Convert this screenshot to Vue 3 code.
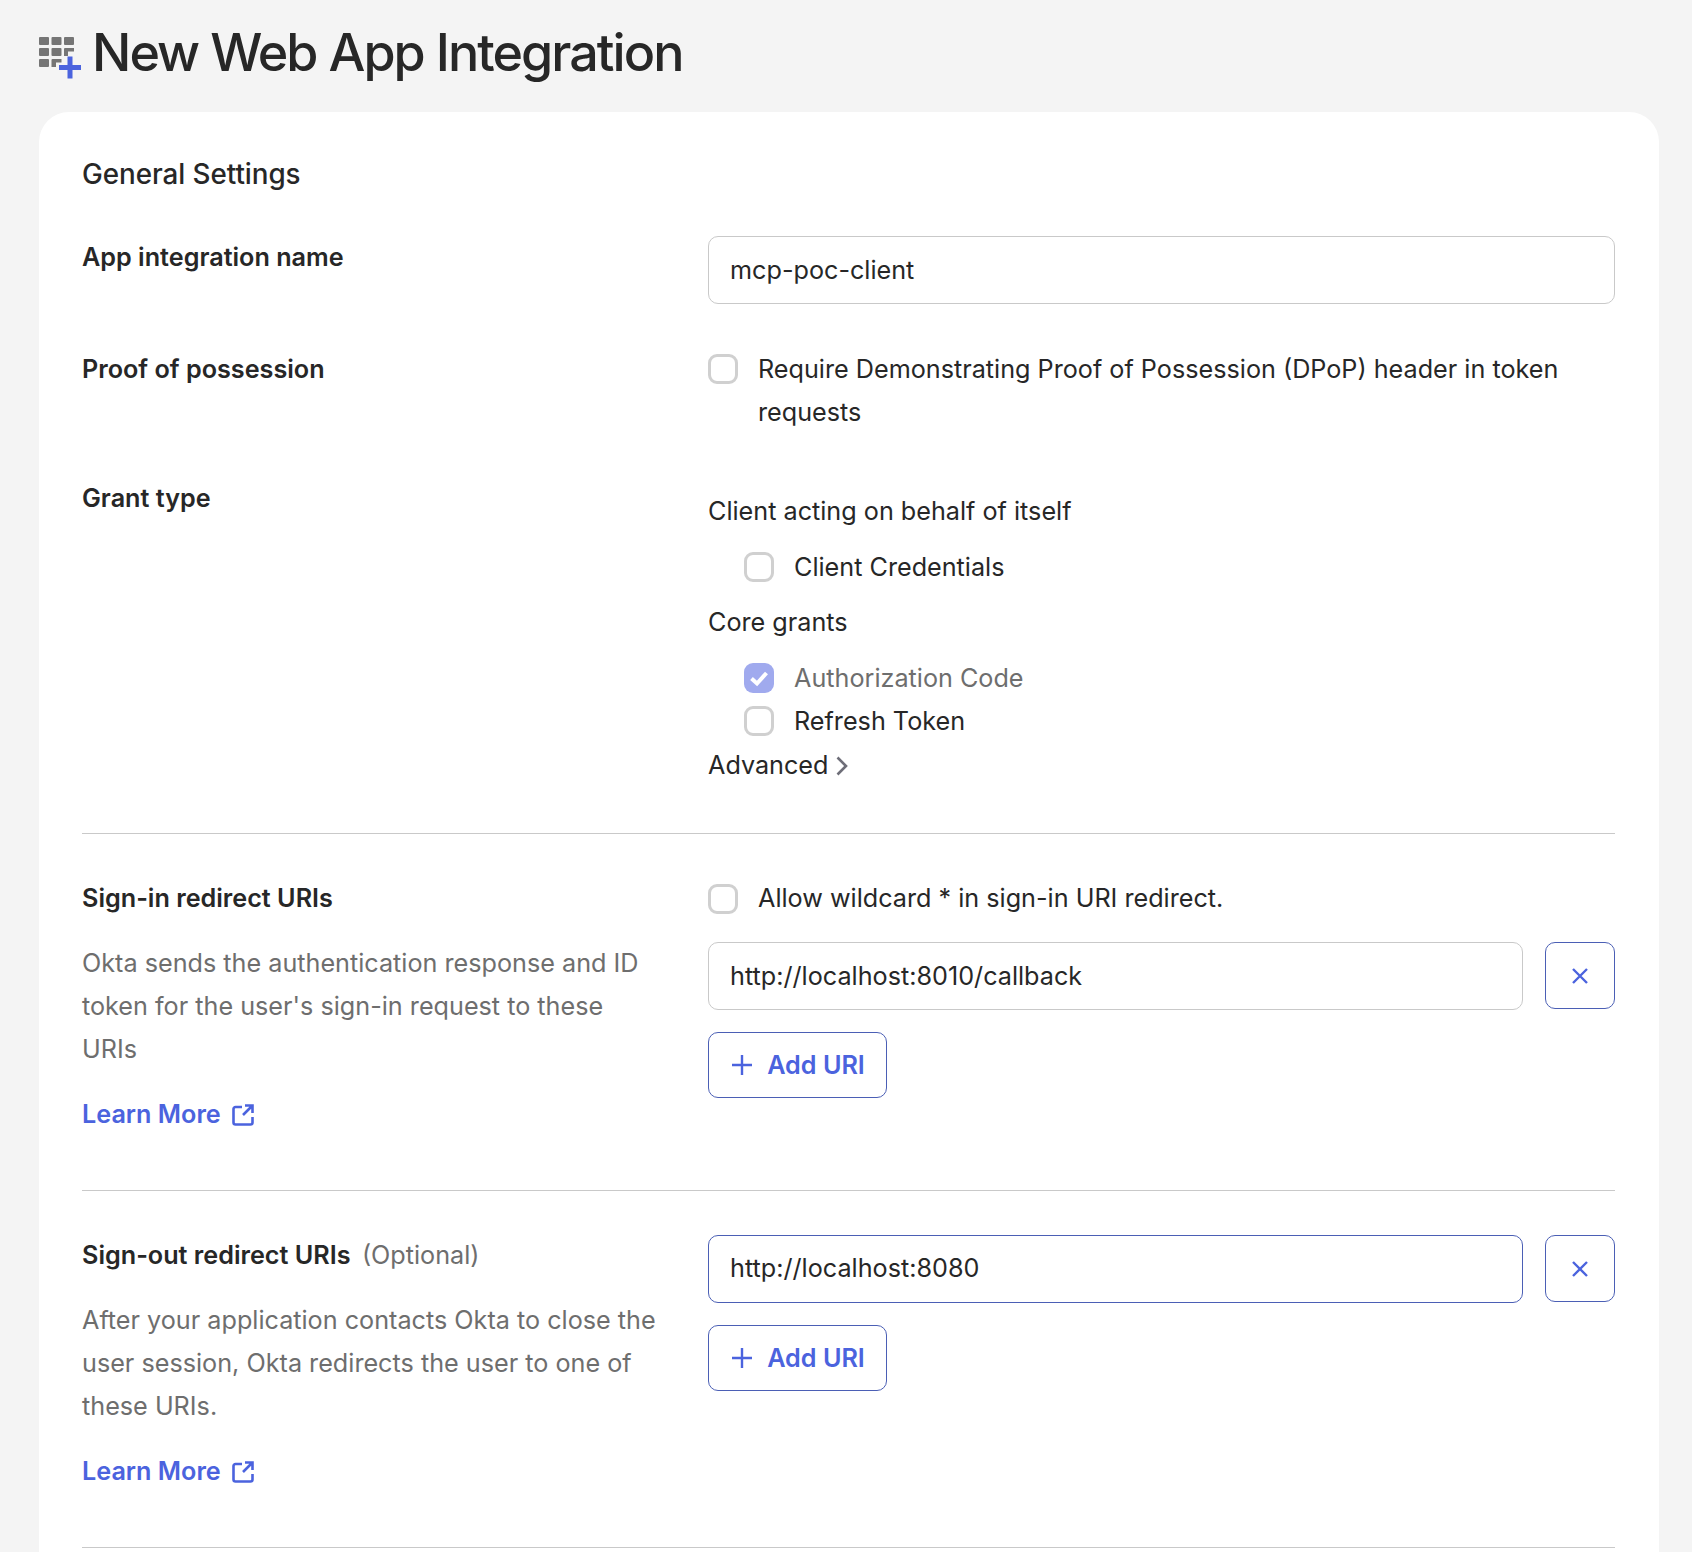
<script setup>
const grants = [
  { label: 'Authorization Code', checked: true },
  { label: 'Refresh Token', checked: false }
]
</script>

<template>
  <div class="page">
    <header class="title-row">
      <svg class="title-icon" viewBox="0 0 44 42" width="44" height="42">
        <g fill="#757575">
          <rect x="0" y="0" width="10" height="8" rx="1" />
          <rect x="12.500" y="0" width="10" height="8" rx="1" />
          <rect x="25" y="0" width="10" height="8" rx="1" />
          <rect x="0" y="11" width="10" height="8" rx="1" />
          <rect x="12.500" y="11" width="10" height="8" rx="1" />
          <path d="M25 12a1 1 0 0 1 1-1h9v3.500h-6v4.500h-4z" />
          <rect x="0" y="22" width="10" height="8" rx="1" />
          <path d="M12.500 23a1 1 0 0 1 1-1h9v3.500h-5.500v4.500h-4.500z" />
        </g>
        <path d="M20 30.500h22M31 19.500v22" stroke="#4b63de" stroke-width="5" fill="none" />
      </svg>
      <h1>New Web App Integration</h1>
    </header>

    <main class="card">
      <h2>General Settings</h2>

      <div class="row name-row">
        <label class="field-label">App integration name</label>
        <div class="input">mcp-poc-client</div>
      </div>

      <div class="row proof-row">
        <label class="field-label">Proof of possession</label>
        <div class="check-row">
          <span class="box"></span>
          <span>Require Demonstrating Proof of Possession (DPoP) header in token requests</span>
        </div>
      </div>

      <div class="row grant-row">
        <label class="field-label">Grant type</label>
        <div class="grant-col">
          <p class="group-title">Client acting on behalf of itself</p>
          <div class="check-row nested cc">
            <span class="box"></span>
            <span>Client Credentials</span>
          </div>
          <p class="group-title core">Core grants</p>
          <div class="grant-list">
            <div v-for="g in grants" :key="g.label" class="check-row nested" :class="{ disabled: g.checked }">
              <span class="box" :class="{ on: g.checked }">
                <svg v-if="g.checked" viewBox="0 0 30 30" width="30" height="30">
                  <path d="M7.500 15.500l5.500 5 9.500-10.500" stroke="#fff" stroke-width="4" fill="none" />
                </svg>
              </span>
              <span>{{ g.label }}</span>
            </div>
          </div>
          <div class="advanced">
            Advanced
            <svg viewBox="0 0 14 22" width="14" height="22">
              <path d="M2.500 2.500l8.500 8.500-8.500 8.500" stroke="#6e6e78" stroke-width="2.600" fill="none" />
            </svg>
          </div>
        </div>
      </div>

      <hr class="divider first" />

      <div class="row uri-row">
        <div class="left">
          <label class="field-label">Sign-in redirect URIs</label>
          <p class="help">Okta sends the authentication response and ID token for the user's sign-in request to these URIs</p>
          <a class="learn">
            Learn More
            <svg viewBox="0 0 24 24" width="24" height="24">
              <path d="M11 4H4.500A2 2 0 0 0 2.500 6v13.500a2 2 0 0 0 2 2h15a2 2 0 0 0 2-2V14M14 2.500h7.500V10M21 3l-9 9" stroke="#4b63de" stroke-width="2.600" fill="none" />
            </svg>
          </a>
        </div>
        <div class="right">
          <div class="check-row wildcard">
            <span class="box"></span>
            <span>Allow wildcard * in sign-in URI redirect.</span>
          </div>
          <div class="uri-line">
            <div class="input">http://localhost:8010/callback</div>
            <button class="btn-x">
              <svg viewBox="0 0 16 16" width="16" height="16">
                <path d="M1 1l14 14M15 1L1 15" stroke="#4b63de" stroke-width="2.400" fill="none" />
              </svg>
            </button>
          </div>
          <button class="btn-add">
            <svg viewBox="0 0 20 20" width="20" height="20">
              <path d="M10 0v20M0 10h20" stroke="#4b63de" stroke-width="2.400" fill="none" />
            </svg>
            Add URI
          </button>
        </div>
      </div>

      <hr class="divider" />

      <div class="row uri-row">
        <div class="left">
          <label class="field-label">Sign-out redirect URIs <span class="optional">(Optional)</span></label>
          <p class="help">After your application contacts Okta to close the user session, Okta redirects the user to one of these URIs.</p>
          <a class="learn">
            Learn More
            <svg viewBox="0 0 24 24" width="24" height="24">
              <path d="M11 4H4.500A2 2 0 0 0 2.500 6v13.500a2 2 0 0 0 2 2h15a2 2 0 0 0 2-2V14M14 2.500h7.500V10M21 3l-9 9" stroke="#4b63de" stroke-width="2.600" fill="none" />
            </svg>
          </a>
        </div>
        <div class="right signout">
          <div class="uri-line">
            <div class="input focused">http://localhost:8080</div>
            <button class="btn-x">
              <svg viewBox="0 0 16 16" width="16" height="16">
                <path d="M1 1l14 14M15 1L1 15" stroke="#4b63de" stroke-width="2.400" fill="none" />
              </svg>
            </button>
          </div>
          <button class="btn-add">
            <svg viewBox="0 0 20 20" width="20" height="20">
              <path d="M10 0v20M0 10h20" stroke="#4b63de" stroke-width="2.400" fill="none" />
            </svg>
            Add URI
          </button>
        </div>
      </div>

      <hr class="divider" />
    </main>
  </div>
</template>

<style>
html, body {
  margin: 0;
  background: #f4f4f4;
  overflow: hidden;
}
</style>

<style scoped>
.page {
  height: 1552px;
  overflow: hidden;
  padding: 0 33px 0 39px;
  font-family: Inter, "Liberation Sans", sans-serif;
  font-size: 25.2px;
  line-height: 43px;
  color: #272727;
  background: #f4f4f4;
}

.title-row {
  height: 112px;
  display: flex;
  align-items: center;
  gap: 9px;
  padding-bottom: 6px;
  box-sizing: border-box;
}

.title-icon {
  margin-top: 10px;
  flex: none;
}

h1 {
  margin: 0;
  font-size: 52px;
  font-weight: 500;
  line-height: 68px;
  letter-spacing: -1.95px;
}

.card {
  background: #fff;
  border-radius: 30px 30px 0 0;
  padding: 42px 44px 0 43px;
  min-height: 1440px;
  box-sizing: border-box;
}

h2 {
  margin: 0;
  font-size: 27.8px;
  font-weight: 500;
  line-height: 40px;
  letter-spacing: -0.05px;
}

.row {
  display: grid;
  grid-template-columns: 626px 1fr;
}

.name-row {
  margin-top: 42px;
}

.proof-row {
  margin-top: 44px;
}

.grant-row {
  margin-top: 43px;
}

.field-label {
  display: block;
  font-weight: 600;
}

.input {
  height: 68px;
  box-sizing: border-box;
  border: 1px solid #c9c9c9;
  border-radius: 10px;
  padding: 0 21px;
  line-height: 66px;
  flex: 1;
}

.input.focused {
  border-color: #4b5fb5;
  line-height: 65px;
}

.check-row {
  display: flex;
  gap: 20px;
}

.check-row.nested {
  padding-left: 36px;
  gap: 20px;
}

.box {
  flex: none;
  width: 30px;
  height: 30px;
  box-sizing: border-box;
  margin-top: 6px;
  border: 3px solid #d0d0d0;
  border-radius: 9px;
  background: #fff;
}

.box.on {
  border: none;
  background: #a0aaee;
}

.box svg {
  display: block;
}

.disabled {
  color: #6e6e6e;
}

.grant-col {
  padding-top: 13px;
}

.group-title {
  margin: 0;
}

.cc {
  margin-top: 13px;
}

.core {
  margin-top: 12px;
}

.grant-list {
  margin-top: 13px;
}

.advanced {
  display: flex;
  align-items: center;
  gap: 7px;
  margin-top: 1px;
}

.divider {
  margin: 0;
  border: none;
  border-top: 1px solid #c9c9c9;
}

.divider.first {
  margin-top: 46px;
}

.uri-row {
  margin-top: 43px;
  min-height: 313px;
}

.left {
  padding-right: 48px;
}

.help {
  margin: 22px 0 0;
  color: #6e6e6e;
}

.learn {
  display: inline-flex;
  align-items: center;
  gap: 10px;
  margin-top: 22px;
  color: #4b63de;
  font-weight: 600;
}

.optional {
  font-weight: 400;
  color: #6e6e6e;
  margin-left: 5px;
}

.wildcard {
  margin-bottom: 22px;
}

.wildcard .box {
  margin-top: 7px;
}

.signout {
  padding-top: 1px;
}

.uri-line {
  display: flex;
  gap: 22px;
}

.btn-x {
  flex: none;
  width: 70px;
  height: 67px;
  padding: 0;
  display: flex;
  align-items: center;
  justify-content: center;
  background: #fff;
  border: 1px solid #4b5fb5;
  border-radius: 10px;
}

.btn-add {
  margin-top: 22px;
  width: 179px;
  height: 66px;
  display: flex;
  align-items: center;
  justify-content: center;
  gap: 15px;
  padding: 0 0 0 2px;
  background: #fff;
  border: 1px solid #4b5fb5;
  border-radius: 10px;
  color: #4b63de;
  font: 600 25.200px Inter, "Liberation Sans", sans-serif;
}
</style>
